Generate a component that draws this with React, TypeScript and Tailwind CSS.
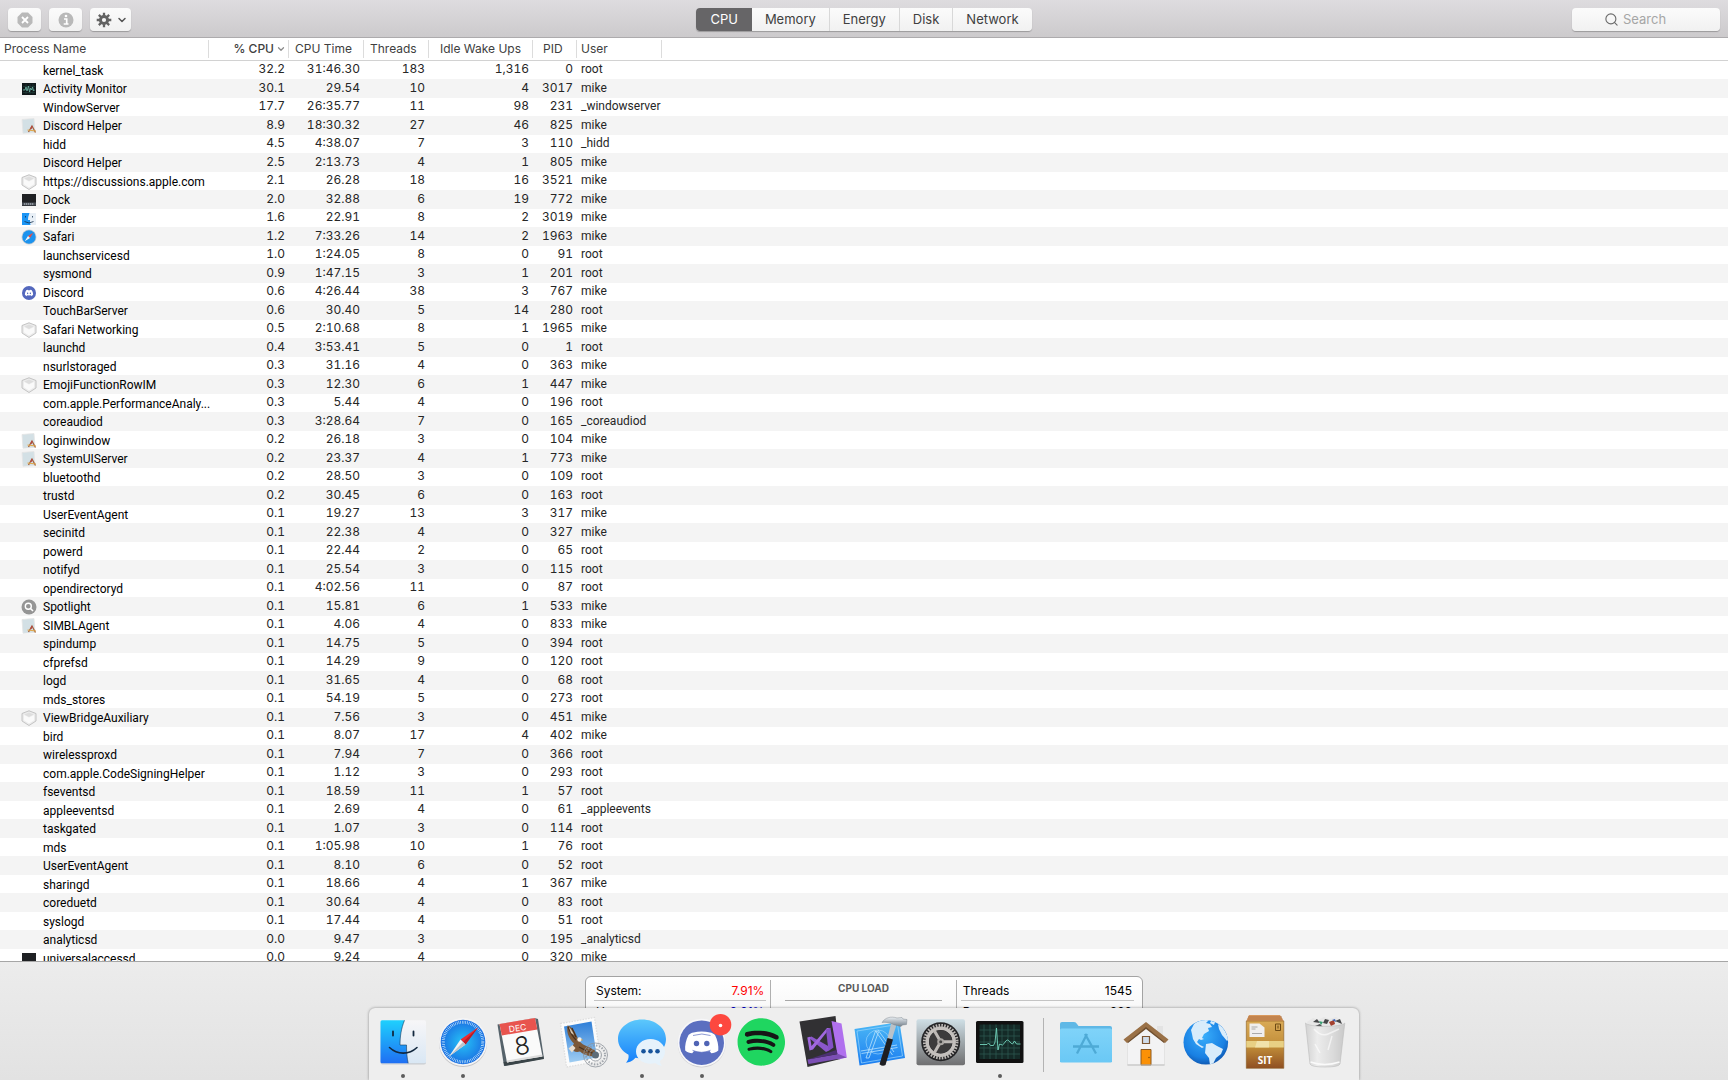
import type { ReactNode } from "react";
import { ChevronDown, Search } from "lucide-react";
import { FaDiscord, FaSpotify } from "react-icons/fa";
import { clsx } from "clsx";

type IconName = "monitor" | "app" | "shield" | "dock" | "finder" | "safari" | "discord" | "spotlight";

type Process = [
  name: string,
  cpu: string,
  time: string,
  threads: number,
  wakeUps: string,
  pid: number,
  user: string,
  icon?: IconName,
];

const processes: Process[] = [
  ["kernel_task", "32.2", "31:46.30", 183, "1,316", 0, "root"],
  ["Activity Monitor", "30.1", "29.54", 10, "4", 3017, "mike", "monitor"],
  ["WindowServer", "17.7", "26:35.77", 11, "98", 231, "_windowserver"],
  ["Discord Helper", "8.9", "18:30.32", 27, "46", 825, "mike", "app"],
  ["hidd", "4.5", "4:38.07", 7, "3", 110, "_hidd"],
  ["Discord Helper", "2.5", "2:13.73", 4, "1", 805, "mike"],
  ["https://discussions.apple.com", "2.1", "26.28", 18, "16", 3521, "mike", "shield"],
  ["Dock", "2.0", "32.88", 6, "19", 772, "mike", "dock"],
  ["Finder", "1.6", "22.91", 8, "2", 3019, "mike", "finder"],
  ["Safari", "1.2", "7:33.26", 14, "2", 1963, "mike", "safari"],
  ["launchservicesd", "1.0", "1:24.05", 8, "0", 91, "root"],
  ["sysmond", "0.9", "1:47.15", 3, "1", 201, "root"],
  ["Discord", "0.6", "4:26.44", 38, "3", 767, "mike", "discord"],
  ["TouchBarServer", "0.6", "30.40", 5, "14", 280, "root"],
  ["Safari Networking", "0.5", "2:10.68", 8, "1", 1965, "mike", "shield"],
  ["launchd", "0.4", "3:53.41", 5, "0", 1, "root"],
  ["nsurlstoraged", "0.3", "31.16", 4, "0", 363, "mike"],
  ["EmojiFunctionRowIM", "0.3", "12.30", 6, "1", 447, "mike", "shield"],
  ["com.apple.PerformanceAnaly...", "0.3", "5.44", 4, "0", 196, "root"],
  ["coreaudiod", "0.3", "3:28.64", 7, "0", 165, "_coreaudiod"],
  ["loginwindow", "0.2", "26.18", 3, "0", 104, "mike", "app"],
  ["SystemUIServer", "0.2", "23.37", 4, "1", 773, "mike", "app"],
  ["bluetoothd", "0.2", "28.50", 3, "0", 109, "root"],
  ["trustd", "0.2", "30.45", 6, "0", 163, "root"],
  ["UserEventAgent", "0.1", "19.27", 13, "3", 317, "mike"],
  ["secinitd", "0.1", "22.38", 4, "0", 327, "mike"],
  ["powerd", "0.1", "22.44", 2, "0", 65, "root"],
  ["notifyd", "0.1", "25.54", 3, "0", 115, "root"],
  ["opendirectoryd", "0.1", "4:02.56", 11, "0", 87, "root"],
  ["Spotlight", "0.1", "15.81", 6, "1", 533, "mike", "spotlight"],
  ["SIMBLAgent", "0.1", "4.06", 4, "0", 833, "mike", "app"],
  ["spindump", "0.1", "14.75", 5, "0", 394, "root"],
  ["cfprefsd", "0.1", "14.29", 9, "0", 120, "root"],
  ["logd", "0.1", "31.65", 4, "0", 68, "root"],
  ["mds_stores", "0.1", "54.19", 5, "0", 273, "root"],
  ["ViewBridgeAuxiliary", "0.1", "7.56", 3, "0", 451, "mike", "shield"],
  ["bird", "0.1", "8.07", 17, "4", 402, "mike"],
  ["wirelessproxd", "0.1", "7.94", 7, "0", 366, "root"],
  ["com.apple.CodeSigningHelper", "0.1", "1.12", 3, "0", 293, "root"],
  ["fseventsd", "0.1", "18.59", 11, "1", 57, "root"],
  ["appleeventsd", "0.1", "2.69", 4, "0", 61, "_appleevents"],
  ["taskgated", "0.1", "1.07", 3, "0", 114, "root"],
  ["mds", "0.1", "1:05.98", 10, "1", 76, "root"],
  ["UserEventAgent", "0.1", "8.10", 6, "0", 52, "root"],
  ["sharingd", "0.1", "18.66", 4, "1", 367, "mike"],
  ["coreduetd", "0.1", "30.64", 4, "0", 83, "root"],
  ["syslogd", "0.1", "17.44", 4, "0", 51, "root"],
  ["analyticsd", "0.0", "9.47", 3, "0", 195, "_analyticsd"],
  ["universalaccessd", "0.0", "9.24", 4, "0", 320, "mike", "dock"],
];

function Drawing({ children }: { children: ReactNode }) {
  return (
    <svg viewBox="0 0 60 60" className="size-[60px]" aria-hidden="true">
      {children}
    </svg>
  );
}

/* Row icons */

function RowIcon({ name }: { name?: IconName }) {
  if (!name) return <span className="w-4 shrink-0" />;
  return (
    <svg viewBox="0 0 16 16" className="size-4 shrink-0" aria-hidden="true">
      {name === "monitor" && (
        <>
          <rect x="1" y="2" width="14" height="12" fill="#10181a" />
          <path d="M2 5.500h12M2 8.500h12M2 11.500h12M5 3v10M9 3v10M12 3v10" stroke="#24443f" strokeWidth=".6" />
          <path d="M2 9h2l1-3 1 4 1.500-5 1 6 1-4 1 2 1-3 1 4 1-1" fill="none" stroke="#6fb5a5" strokeWidth=".8" />
        </>
      )}
      {name === "app" && (
        <>
          <path d="M1 1.500 13 .5l1 14-12 .8z" fill="#d3e0e5" stroke="#e4e4e4" strokeWidth=".8" />
          <path d="m7.500 14 3.500-6 3.500 6.500" fill="none" stroke="#a4603c" strokeWidth="1.300" />
          <path d="m6.500 12 8.500 1" stroke="#dfa64a" strokeWidth="1.200" />
          <path d="m11 8-1 3" stroke="#b64545" strokeWidth="1.200" />
        </>
      )}
      {name === "shield" && (
        <>
          <path d="M8 .8 15 3.500V11L8 15.500 1 11V3.500z" fill="#ececec" stroke="#bdbdbd" strokeWidth=".9" />
          <path d="M8 2.500 12.500 4.500 8 7 3.500 4.500z" fill="#dedede" />
          <path d="M3 5v5.300L8 13.500l5-3.200V5L8 7.500z" fill="#fafafa" />
        </>
      )}
      {name === "dock" && (
        <>
          <rect x="1" y="2" width="14" height="12" fill="#1f2124" />
          <rect x="1" y="10.500" width="14" height="3" fill="#4b5058" />
          <path d="M3 12h10" stroke="#cfd6df" strokeWidth="1.200" strokeDasharray="1.300 .7" />
        </>
      )}
      {name === "finder" && (
        <>
          <rect x="1" y="2" width="14" height="12" rx=".6" fill="#e8eff6" />
          <path d="M1 2h7.500Q7 5.500 7 9h2q0 3 .5 5H1z" fill="#1b95f5" />
          <path d="M4.500 5v1.500M11.500 5v1.500M3.500 10.500q4.500 3 9 0" fill="none" stroke="#14304d" strokeWidth=".8" />
        </>
      )}
      {name === "safari" && (
        <>
          <circle cx="8" cy="8" r="7.500" fill="#c9ced3" />
          <circle cx="8" cy="8" r="6.700" fill="#1c93ee" />
          <path d="M12.300 3.700 7 7l2 2z" fill="#f0483e" />
          <path d="M3.700 12.300 7 7l2 2z" fill="#f5f5f5" />
        </>
      )}
      {name === "discord" && (
        <>
          <circle cx="8" cy="8" r="7" fill="#5468bd" />
          <FaDiscord x="3.500" y="3.500" size="9" color="#fff" />
        </>
      )}
      {name === "spotlight" && (
        <>
          <circle cx="8" cy="8" r="7.500" fill="#959595" />
          <circle cx="7.300" cy="7.200" r="3" fill="none" stroke="#fff" strokeWidth="1.400" />
          <path d="m9.500 9.500 2.500 2.500" stroke="#fff" strokeWidth="1.600" />
        </>
      )}
    </svg>
  );
}

/* Dock icons */

function FinderIcon() {
  return (
    <Drawing>
      <defs>
        <linearGradient id="finder-blue" x1="0" y1="0" x2="0" y2="1">
          <stop offset="0" stopColor="#1fd0fd" />
          <stop offset="1" stopColor="#1f6ff3" />
        </linearGradient>
        <linearGradient id="finder-white" x1="0" y1="0" x2="0" y2="1">
          <stop offset="0" stopColor="#f7f6f8" />
          <stop offset="1" stopColor="#d9e7f4" />
        </linearGradient>
      </defs>
      <rect x="7.500" y="9" width="45.500" height="43.500" rx="2" fill="#c9ccd0" />
      <rect x="7.500" y="8.300" width="45.500" height="43" rx="1.500" fill="url(#finder-white)" />
      <path d="M9 8.300h22.500C28 17 27 25 27 33h6.500c0 7 .5 13 1.700 18.300H9q-1.500 0-1.500-1.500v-40q0-1.500 1.500-1.500z" fill="url(#finder-blue)" />
      <path d="M31.500 8.300C28 17 27 25 27 33h6.500c0 7 .5 13 1.700 18.300" fill="none" stroke="#173a5c" strokeWidth=".6" />
      <path d="M20 19.500v4M40.500 19.500v4" stroke="#12283f" strokeWidth="1.800" strokeLinecap="round" />
      <path d="M16.500 35.500c8 7.500 19.500 7.500 27.500 0" fill="none" stroke="#12283f" strokeWidth="1.600" strokeLinecap="round" />
    </Drawing>
  );
}

function SafariIcon() {
  return (
    <Drawing>
      <defs>
        <radialGradient id="safari-face">
          <stop offset="0" stopColor="#26c4f7" />
          <stop offset="1" stopColor="#1a6fe2" />
        </radialGradient>
      </defs>
      <circle cx="30" cy="31" r="24" fill="#c3c3c5" />
      <circle cx="30" cy="30" r="24" fill="#f4f4f5" />
      <circle cx="30" cy="30" r="22.300" fill="url(#safari-face)" />
      <circle cx="30" cy="30" r="19.800" fill="none" stroke="#d7effd" strokeWidth="3" strokeDasharray=".6 1.130" />
      <path d="M45 15.500 27.500 27.500 32.500 32.500z" fill="#ee2b30" />
      <path d="M45 15.500 32.500 32.500 30 30z" fill="#b91d27" />
      <path d="M16 44.500 27.500 27.500 32.500 32.500z" fill="#f4f4f4" />
      <path d="M16 44.500 30 30 32.500 32.500z" fill="#bdc4ca" />
    </Drawing>
  );
}

function CalendarIcon() {
  return (
    <Drawing>
      <path d="M5.500 12.500 42.500 6l3.500 1L52 46.500 12 54z" fill="#56636b" />
      <path d="M11.500 50 51 43.500 52 47 12.500 54z" fill="#3a4448" />
      <path d="M7.500 12 43 6l7.500 38.500L15 50.500z" fill="#fafafa" />
      <path d="M15 50.500 50.500 44.500l-.4-2L14.700 48.500z" fill="#dcdcdc" />
      <path d="M7.500 12 43 6l2.300 11.500L9.800 23.500z" fill="#e8544e" />
      <g transform="rotate(-8 27 30)" fontFamily="Inter, sans-serif" textAnchor="middle">
        <text x="27.500" y="19" fontSize="8.500" fill="#fff">DEC</text>
        <text x="29.500" y="43" fontSize="25" fontWeight="300" fill="#222">8</text>
      </g>
    </Drawing>
  );
}

function MailIcon() {
  return (
    <Drawing>
      <defs>
        <linearGradient id="mail-sky" x1="0" y1="0" x2="0" y2="1">
          <stop offset="0" stopColor="#2f7fd8" />
          <stop offset="1" stopColor="#9fcdf2" />
        </linearGradient>
      </defs>
      <path d="M8.500 11.500 42.500 5.500 49 49 14.500 55z" fill="#fbfbfb" stroke="#dedede" strokeWidth="1.300" strokeDasharray="1.500 1.300" />
      <path d="m12 14.500 27.500-5L45 45.500 17.500 50.500z" fill="url(#mail-sky)" />
      <path d="M15.500 13.500c4 1 7 5 8.500 9l3 6c2 3 5 5 9 6l7 4 1 6c-6 0-12-1-16-5-4 1-7 0-9-3l3-5c-4-4-8-10-6.500-18z" fill="#7b5838" />
      <path d="M16 15c2 5 4 9 8 13M20 16l4 9M27 35c5 3 9 5 16 7" fill="none" stroke="#46301e" strokeWidth="1.200" />
      <path d="M17 15c2 2 4 5 5 8l-3-2z" fill="#d8c7b0" />
      <path d="m16.500 36.500 4-3.500 3 3-3.500 4.500z" fill="#e9ded0" />
      <circle cx="27.500" cy="27.500" r="2.200" fill="#f6f1ea" />
      <path d="m29.300 27 2 1-2 .8z" fill="#e2a63a" />
      <g fill="none" stroke="#8d949b" strokeOpacity=".8">
        <circle cx="43.500" cy="43" r="12" />
        <circle cx="43.500" cy="43" r="9.500" strokeWidth="2" strokeDasharray="1.500 1.500" />
        <circle cx="43.500" cy="43" r="6" />
      </g>
      <circle cx="43.500" cy="43" r="3.500" fill="#5d6c78" />
    </Drawing>
  );
}

function MessagesIcon() {
  return (
    <Drawing>
      <defs>
        <linearGradient id="messages-blue" x1="0" y1="0" x2="0" y2="1">
          <stop offset="0" stopColor="#5cc8fb" />
          <stop offset="1" stopColor="#1580fb" />
        </linearGradient>
      </defs>
      <path d="M30 7.500C43.500 7.500 54 16 54 27S43.500 46.500 30 46.500q-3.500 0-6.500-.8C20.500 49 17 50.500 14 50.700c2-2 3-5 2.500-8C10 39.500 6 33.500 6 27 6 16 16.500 7.500 30 7.500z" fill="url(#messages-blue)" />
      <path d="M38.500 27C46.500 27 53 32.500 53 39.500c0 4-2 7.300-5 9.500 0 2 1 3.700 2 4.700-2.500 0-5-1-6.700-2.600q-2.300.6-4.800.6C30.500 51.700 24 46.500 24 39.500S30.500 27 38.500 27z" fill="#e6f2fb" />
      <g fill="#17549c">
        <circle cx="31.500" cy="39.300" r="2.300" />
        <circle cx="38.500" cy="39.300" r="2.300" />
        <circle cx="45.500" cy="39.300" r="2.300" />
      </g>
    </Drawing>
  );
}

function DiscordIcon() {
  return (
    <Drawing>
      <circle cx="29.700" cy="31.500" r="24" fill="#cfcfd2" />
      <circle cx="29.700" cy="30.700" r="24" fill="#f7f7f9" />
      <circle cx="29.700" cy="30.700" r="22.300" fill="#5b6fc0" />
      <path d="M21.500 20.500c5-1.500 11-1.500 16.500 0 2 .3 4 1.300 5 2.500 2.500 5 3.700 10.500 3.300 15.500-2.300 1.800-4.500 2.600-7 2.800L37.500 39c-5 1.500-10.500 1.500-15.500 0l-1.800 2.300c-2.500-.2-4.900-1-7-2.800-.5-5 .8-10.500 3.300-15.500 1-1.200 3-2.200 5-2.500z" fill="#fff" />
      <circle cx="24.500" cy="31.500" r="2.700" fill="#5064b5" />
      <circle cx="34.800" cy="31.500" r="2.700" fill="#5064b5" />
      <path d="M21 23.500q9-3 17.500 0M20.500 38.300q9 4 18 0" fill="none" stroke="#5b6fc0" strokeWidth=".7" />
      <circle cx="48.500" cy="12.700" r="10.800" fill="#fd483f" />
      <circle cx="48.500" cy="13.500" r="1.800" fill="#fff" />
    </Drawing>
  );
}

function SpotifyIcon() {
  return (
    <Drawing>
      <circle cx="30.300" cy="30" r="23" fill="#161616" />
      <FaSpotify x="5.800" y="5.500" size="49" color="#1fd660" />
    </Drawing>
  );
}

function VisualStudioIcon() {
  return (
    <Drawing>
      <path d="M8.500 9.500 44.500 4l5 43L16.500 55z" fill="#313033" />
      <path d="m40.500 9 10 2.500 5.300 34-8.500 2z" fill="#b070ee" />
      <path d="m16.500 47.500 31-5.500 8.300 3.500L17.500 52z" fill="#7c4fb5" />
      <path d="m17 47.500 29.500-5.500-1-4z" fill="#4c3073" />
      <path d="m17.500 25.500 3-1L38 34.500v4L35 40z" fill="#8b57ca" />
      <path d="m16.300 25.500 2.700-.8 1.500 9.300L36 16l3 0-17 21.500-3.500 1z" fill="#a068de" />
      <path d="m35 17.500 4.500-1.800 3 19.800-5 3.500z" fill="#8450c4" />
    </Drawing>
  );
}

function XcodeIcon() {
  return (
    <Drawing>
      <defs>
        <linearGradient id="xcode-blue" x1="0" y1="0" x2="0" y2="1">
          <stop offset="0" stopColor="#4cb9f6" />
          <stop offset="1" stopColor="#1b7df0" />
        </linearGradient>
        <linearGradient id="hammer-steel" x1="0" y1="0" x2="0" y2="1">
          <stop offset="0" stopColor="#e9eef2" />
          <stop offset="1" stopColor="#75818c" />
        </linearGradient>
      </defs>
      <path d="M3.500 17 48.500 10 54 46 8.500 53.500z" fill="url(#xcode-blue)" />
      <path d="M6 19 46.500 12.500 51.500 44 10.500 51z" fill="none" stroke="#9bd6fb" strokeWidth=".7" />
      <g fill="none" stroke="#b9e2fd" strokeWidth=".8">
        <path d="m15 46 9.500-27 3 1-9.500 26zM24.500 19l17 24M27 18l16 22M10 39l36-6M10.500 41.500l36-6" />
        <circle cx="27" cy="30" r="12" strokeWidth=".5" />
      </g>
      <path d="m40.500 10 5.500 1-5.500 18-4.500-1z" fill="#b9c2c9" />
      <path d="m36.500 26 5.500 1.500-7.500 25.500q-3 2-6-.8z" fill="#1e1f22" />
      <path d="M31 10.500c3-5 9-6.500 15-4.500l5-.5 1 1.500 4 .5-.5 5-4 .5-1.500 1.500-7-1.800C39 10.500 35 10 31 10.500z" fill="url(#hammer-steel)" stroke="#6c7780" strokeWidth=".4" />
    </Drawing>
  );
}

function SettingsIcon() {
  return (
    <Drawing>
      <defs>
        <linearGradient id="settings-plate" x1="0" y1="0" x2="0" y2="1">
          <stop offset="0" stopColor="#cfdfe6" />
          <stop offset="1" stopColor="#6f6f70" />
        </linearGradient>
      </defs>
      <rect x="5.500" y="7.300" width="48.500" height="46" rx="2" fill="url(#settings-plate)" />
      <circle cx="29.700" cy="29.700" r="19.500" fill="#242426" />
      <circle cx="29.700" cy="29.700" r="16.300" fill="none" stroke="#bcb8b5" strokeWidth="3" strokeDasharray="1.600 1.250" />
      <circle cx="29.700" cy="29.700" r="13.500" fill="none" stroke="#c4c0bd" strokeWidth="3.500" />
      <circle cx="29.700" cy="29.700" r="11.500" fill="#3c3b3c" />
      <path d="M29.700 29.700H42M29.700 29.700 23.500 19M29.700 29.700 23.500 40.500" stroke="#bdb9b6" strokeWidth="3" />
      <circle cx="29.700" cy="29.700" r="3.500" fill="#aaa6a3" />
      <circle cx="29.700" cy="29.700" r="1.500" fill="#444" />
    </Drawing>
  );
}

function MonitorIcon() {
  return (
    <Drawing>
      <rect x="6" y="9" width="47.500" height="42" rx="1.500" fill="#111" />
      <rect x="9.500" y="12.500" width="40.500" height="34.500" fill="#142a27" />
      <path d="M9.500 18h40.500M9.500 24h40.500M9.500 30h40.500M9.500 36h40.500M9.500 42h40.500M14 12.500V47M20 12.500V47M26 12.500V47M32 12.500V47M38 12.500V47M44 12.500V47" stroke="#2f5c54" strokeWidth=".7" />
      <path d="M10 32.500h7l1.500-1.500 2 2.500h3L25 30l1.500-14 1.500 22 1.500-6 3 1c2-1 3-5 5-5s3 4 5 4l2-3 2 3h4" fill="none" stroke="#72d3bb" strokeWidth=".9" strokeLinejoin="round" />
    </Drawing>
  );
}

function FolderIcon() {
  return (
    <Drawing>
      <defs>
        <linearGradient id="folder-blue" x1="0" y1="0" x2="0" y2="1">
          <stop offset="0" stopColor="#7fd3f9" />
          <stop offset="1" stopColor="#6ac8f5" />
        </linearGradient>
      </defs>
      <path d="M4 50V12q0-2 2-2h12q2 0 3 2l1.500 2H54q2 0 2 2v34z" fill="#5fb8e6" />
      <path d="M4 18q0-1.500 1.500-1.500h49Q56 16.500 56 18v31q0 1.500-1.500 1.500h-49Q4 50.500 4 49z" fill="url(#folder-blue)" />
      <g fill="none" stroke="#4eaad6" strokeWidth="2.300">
        <path d="m31 22-10 19.500M29 22l11 19.500M17 34.500h26" />
      </g>
    </Drawing>
  );
}

function HomeIcon() {
  return (
    <Drawing>
      <path d="M41 14h6v14h-6z" fill="#e3e3e3" />
      <path d="M11.500 28 30 13l18.500 15v25h-37z" fill="#f3f3f4" stroke="#d4d4d4" strokeWidth=".5" />
      <path d="m30 10 22.500 17.500-3.500 3.500L30 16 11 31l-3.500-3.500z" fill="#9a7147" />
      <path d="m30 15 18.500 15-.5 1L30 17 12 31l-.5-1z" fill="#6f4e2e" />
      <path d="M26.500 24.500h7v7h-7z" fill="#d0dcea" stroke="#7d5633" strokeWidth="1.200" />
      <path d="M25 37.500h10V53H25z" fill="#fb9106" stroke="#8b5a23" />
      <path d="M11.500 53h37" stroke="#bdbdbd" />
      <circle cx="33" cy="45.500" r=".8" fill="#85510c" />
    </Drawing>
  );
}

function GlobeIcon() {
  return (
    <Drawing>
      <defs>
        <radialGradient id="globe-sea" cx=".45" cy=".35" r=".7">
          <stop offset="0" stopColor="#39aefb" />
          <stop offset=".7" stopColor="#1980e3" />
          <stop offset="1" stopColor="#0d4fa6" />
        </radialGradient>
        <clipPath id="globe-disc">
          <circle cx="29.800" cy="30.300" r="22.300" />
        </clipPath>
      </defs>
      <circle cx="29.800" cy="30.300" r="22.300" fill="url(#globe-sea)" />
      <g fill="#d8ecfb" clipPath="url(#globe-disc)">
        <path d="M18 12c5-4 11-5 15-4l-3 3 4 1 2 3-4 1 1 3-5 3-2 4 2 1-3 1-2-1-2 3 3 3 4 2-2 1-6-4-3-5-1-5-1-4z" />
        <path d="m30 32 6-1 5 3 6 3-2 5-5 4-3 6-3 1-1-7-4-5z" />
        <path d="m42 12 4 3 3 4 4 8-2 2-5-6-3-6z" />
        <path d="m35 9 4 1-1 3-4-2z" />
      </g>
    </Drawing>
  );
}

function ArchiveIcon() {
  return (
    <Drawing>
      <defs>
        <linearGradient id="archive-box" x1="0" y1="0" x2="0" y2="1">
          <stop offset="0" stopColor="#d9aa56" />
          <stop offset=".55" stopColor="#c08c38" />
          <stop offset="1" stopColor="#8f4f22" />
        </linearGradient>
      </defs>
      <path d="M14 3h31l3.700 6H11.300z" fill="#d9995e" />
      <path d="M13 5h34M12.500 7h35" stroke="#9c6030" strokeWidth=".7" />
      <path d="M11.300 9h37.500v47.300H11.300z" fill="url(#archive-box)" stroke="#8a5c22" strokeWidth=".6" />
      <path d="M11.300 29h37.500v6.500H11.300z" fill="#e8d084" />
      <path d="M22 29h12v6.500H20z" fill="#f5ebbd" opacity=".7" />
      <path d="M14.500 11.500h10l5 4V25h-15z" fill="#f0efef" />
      <path d="M16.500 15h6M16.500 17h4M17 21.500h10" stroke="#aaa" />
      <path d="M40.500 12h5v6.500h-5zM43 13.500v3" fill="none" stroke="#6d4a15" />
      <text x="30" y="52" fontSize="10" fontWeight="700" textAnchor="middle" fontFamily="Open Sans, sans-serif" fill="#fff">
        SIT
      </text>
    </Drawing>
  );
}

function TrashIcon() {
  return (
    <Drawing>
      <defs>
        <linearGradient id="trash-can" x1="0" y1="0" x2="1" y2="0">
          <stop offset="0" stopColor="#cfcfcf" />
          <stop offset=".3" stopColor="#ececec" />
          <stop offset=".7" stopColor="#d9d9d9" />
          <stop offset="1" stopColor="#c6c6c6" />
        </linearGradient>
      </defs>
      <path d="m12 10 6-4 5 2 6-3 5 2 7-2 7 6-3 6H14z" fill="#e7e7e7" />
      <path d="m18 10 4-3 3 4zM30 7l4 1-2 4-4-1zM40 9l5-2 2 5zM20 14l5-2 3 3z" fill="#47484a" />
      <path d="m24 9 4 1-2 3z" fill="#3a9f73" />
      <path d="m34 10 5-2 1 4-4 2z" fill="#a4412f" />
      <path d="m37 8 3-1 1 3z" fill="#3b62b5" />
      <path d="M10.500 11c3 4.500 36 4.500 39.300 0L45 52q-1 3-15 3t-15-3z" fill="url(#trash-can)" fillOpacity=".93" stroke="#bcbcbc" strokeWidth=".6" />
      <path d="M19 17q7 8 14 5t11-5M20 32l5 9M37 24l-4 14" fill="none" stroke="#fff" strokeWidth="1.500" strokeOpacity=".6" />
      <path d="M15.500 50q14 5 29 0" fill="none" stroke="#fafafa" strokeWidth="1.500" />
    </Drawing>
  );
}

/* Toolbar */

const toolButton =
  "flex h-[23px] items-center justify-center rounded bg-linear-to-b from-[#fbfbfb] to-[#f1f1f1] shadow-[0_1px_1px_rgba(0,0,0,0.25)]";

const tabs = ["CPU", "Memory", "Energy", "Disk", "Network"];

function Toolbar() {
  return (
    <header className="grid h-[38px] shrink-0 grid-cols-[1fr_auto_1fr] items-center border-b border-[#adabad] bg-linear-to-b from-[#dedcdf] to-[#cccacc] px-2 pt-0.5">
      <div className="flex gap-2">
        <button aria-label="Quit process" className={clsx(toolButton, "w-[33px]")}>
          <svg viewBox="0 0 16 16" className="size-4">
            <path d="M5 .5h6L15.500 5v6L11 15.500H5L.5 11V5z" fill="#b9b9b9" />
            <path d="m5 5 6 6m0-6-6 6" stroke="#fff" strokeWidth="1.800" />
          </svg>
        </button>
        <button aria-label="Inspect process" className={clsx(toolButton, "w-[33px]")}>
          <svg viewBox="0 0 16 16" className="size-4">
            <circle cx="8" cy="8" r="7.500" fill="#b9b9b9" />
            <path d="M6 7h2.700v5M5.700 12h4.800" fill="none" stroke="#fff" strokeWidth="1.700" />
            <circle cx="8" cy="4" r="1.300" fill="#fff" />
          </svg>
        </button>
        <button aria-label="Options" className={clsx(toolButton, "w-[41px] gap-1 pl-0.5")}>
          <svg viewBox="0 0 16 16" className="size-4" fill="none" stroke="#636363">
            <circle cx="8" cy="8" r="3.600" strokeWidth="3" />
            <path
              d="M8 .7v3M8 12.300v3M.7 8h3M12.300 8h3M2.840 2.840l2.100 2.100M11.060 11.060l2.100 2.100M2.840 13.160l2.100-2.100M11.060 4.940l2.100-2.100"
              strokeWidth="2.300"
            />
          </svg>
          <ChevronDown className="size-3 text-[#555]" strokeWidth={3} />
        </button>
      </div>

      <nav className="flex h-[23px] overflow-hidden rounded bg-linear-to-b from-[#fbfbfb] to-[#f1f1f1] text-[13px] text-[#404040] shadow-[0_1px_1px_rgba(0,0,0,0.25)]">
        {tabs.map((tab, i) => (
          <button
            key={tab}
            aria-pressed={i === 0}
            className={clsx(
              i === 0 ? "bg-[#666567] px-3.5 text-white" : "px-[13px]",
              i > 1 && "border-l border-[#d8d8d8]",
            )}
          >
            {tab}
          </button>
        ))}
      </nav>

      <label className="flex h-[23px] w-[148px] items-center gap-1 justify-self-end rounded bg-linear-to-b from-[#fbfbfb] to-[#f1f1f1] pl-8 shadow-[0_1px_1px_rgba(0,0,0,0.25)]">
        <Search className="size-[15px] shrink-0 text-[#6b6b6b]" strokeWidth={1.8} />
        <input
          type="text"
          aria-label="Search"
          placeholder="Search"
          className="w-full min-w-0 bg-transparent text-[13px] outline-none placeholder:text-[#a6a6a6]"
        />
      </label>
    </header>
  );
}

/* Process list */

function HeadCell({ children, className }: { children?: ReactNode; className?: string }) {
  return (
    <th className="p-0 font-normal">
      <div className={clsx("flex h-[18px] items-center border-r border-[#dcdcdc]", className)}>{children}</div>
    </th>
  );
}

function NumberCell({ children }: { children: ReactNode }) {
  return (
    <td className="text-right tabular-nums">
      <div className="pr-1 pb-0.5">{children}</div>
    </td>
  );
}

function ProcessTable() {
  return (
    <table className="w-full table-fixed border-separate border-spacing-0 text-left text-xs leading-4 whitespace-nowrap">
      <colgroup>
        <col className="w-[209px]" />
        <col className="w-[80px]" />
        <col className="w-[75px]" />
        <col className="w-[65px]" />
        <col className="w-[104px]" />
        <col className="w-[44px]" />
        <col className="w-[85px]" />
        <col />
      </colgroup>
      <thead className="text-[#404040]">
        <tr className="h-[23px] [&>th]:border-b [&>th]:border-[#d2d2d2]">
          <HeadCell className="pl-1">Process Name</HeadCell>
          <HeadCell className="justify-end gap-0.5 pr-0.5 font-medium">
            % CPU
            <ChevronDown className="size-2.5 text-[#8a8a8a]" strokeWidth={3} />
          </HeadCell>
          <HeadCell className="pl-1.5">CPU Time</HeadCell>
          <HeadCell className="pl-1.5">Threads</HeadCell>
          <HeadCell className="justify-center">Idle Wake Ups</HeadCell>
          <HeadCell className="pl-2.5">PID</HeadCell>
          <HeadCell className="pl-1">User</HeadCell>
          <th className="p-0" />
        </tr>
      </thead>
      <tbody>
        {processes.map(([name, cpu, time, threads, wakeUps, pid, user, icon]) => (
          <tr
            key={`${name}-${pid}`}
            className="h-[18px] text-[#262626] even:h-[19px] even:bg-[#f4f4f4] [&>td]:p-0"
          >
            <td>
              <div className="flex h-[18px] items-center gap-1.5 pt-px pl-[21px] font-[Roboto,sans-serif] text-black">
                <RowIcon name={icon} />
                {name}
              </div>
            </td>
            <NumberCell>{cpu}</NumberCell>
            <NumberCell>{time}</NumberCell>
            <NumberCell>{threads}</NumberCell>
            <NumberCell>{wakeUps}</NumberCell>
            <NumberCell>{pid}</NumberCell>
            <td>
              <div className="pb-0.5 pl-1 font-[Roboto,sans-serif]">{user}</div>
            </td>
            <td />
          </tr>
        ))}
      </tbody>
    </table>
  );
}

/* Summary */

function StatRow({ label, value, className }: { label: string; value: string; className?: string }) {
  return (
    <div className="flex h-[21px] items-center justify-between border-b border-[#c4c4c4] px-0.5 pt-0.5">
      <dt>{label}</dt>
      <dd className={className}>{value}</dd>
    </div>
  );
}

function Summary() {
  return (
    <section className="mx-auto mt-3.5 grid h-[120px] w-[558px] grid-cols-3 rounded-md border border-[#a3a3a3] bg-linear-to-b from-white to-[#e6e6e6] pt-[3px] text-xs text-black">
      <dl className="border-r border-[#b0b0b0] pr-1 pl-2">
        <StatRow label="System:" value="7.91%" className="text-[#f00]" />
        <StatRow label="User:" value="9.91%" className="text-[#00c]" />
      </dl>
      <div className="border-r border-[#b0b0b0] px-3.5">
        <h2 className="flex h-[21px] items-center justify-center border-b border-[#a8a8a8] pb-0.5 text-[10px] font-bold text-[#5a5a5a]">
          CPU LOAD
        </h2>
      </div>
      <dl className="pr-2 pl-1">
        <StatRow label="Threads" value="1545" />
        <StatRow label="Processes" value="328" />
      </dl>
    </section>
  );
}

/* Dock */

const dockApps = [
  { name: "Finder", icon: <FinderIcon />, running: true },
  { name: "Safari", icon: <SafariIcon />, running: true },
  { name: "Calendar", icon: <CalendarIcon /> },
  { name: "Mail", icon: <MailIcon /> },
  { name: "Messages", icon: <MessagesIcon />, running: true },
  { name: "Discord", icon: <DiscordIcon />, running: true },
  { name: "Spotify", icon: <SpotifyIcon /> },
  { name: "Visual Studio", icon: <VisualStudioIcon /> },
  { name: "Xcode", icon: <XcodeIcon /> },
  { name: "System Preferences", icon: <SettingsIcon /> },
  { name: "Activity Monitor", icon: <MonitorIcon />, running: true },
];

const dockPlaces = [
  { name: "Applications", icon: <FolderIcon /> },
  { name: "Home", icon: <HomeIcon /> },
  { name: "Network", icon: <GlobeIcon /> },
  { name: "Archive", icon: <ArchiveIcon /> },
  { name: "Trash", icon: <TrashIcon /> },
];

function DockItem({ name, icon, running }: { name: string; icon: ReactNode; running?: boolean }) {
  return (
    <button aria-label={name} className="flex min-w-0 flex-1 flex-col items-center gap-0.5">
      {icon}
      {running && <span className="size-1 rounded-full bg-[#5c5c5c]" />}
    </button>
  );
}

function Dock() {
  return (
    <aside className="absolute bottom-0 left-1/2 flex h-[72px] w-[990px] -translate-x-1/2 rounded-t-md bg-[#eee] px-1 pt-1 shadow-[0_0_3px_rgba(0,0,0,0.4)]">
      {dockApps.map((app) => (
        <DockItem key={app.name} {...app} />
      ))}
      <div className="flex w-[26px] justify-center pt-1.5">
        <div className="h-[54px] w-px bg-[#b3b3b3]" />
      </div>
      {dockPlaces.map((place) => (
        <DockItem key={place.name} {...place} />
      ))}
    </aside>
  );
}

export default function App() {
  return (
    <div className="relative flex h-screen flex-col overflow-hidden bg-white font-[Inter,sans-serif]">
      <Toolbar />
      <main className="min-h-0 flex-1 overflow-hidden">
        <ProcessTable />
      </main>
      <footer className="h-[119px] shrink-0 overflow-hidden border-t border-[#a6a6a6] bg-linear-to-b from-[#ececec] to-[#e2e2e2]">
        <Summary />
      </footer>
      <Dock />
    </div>
  );
}
